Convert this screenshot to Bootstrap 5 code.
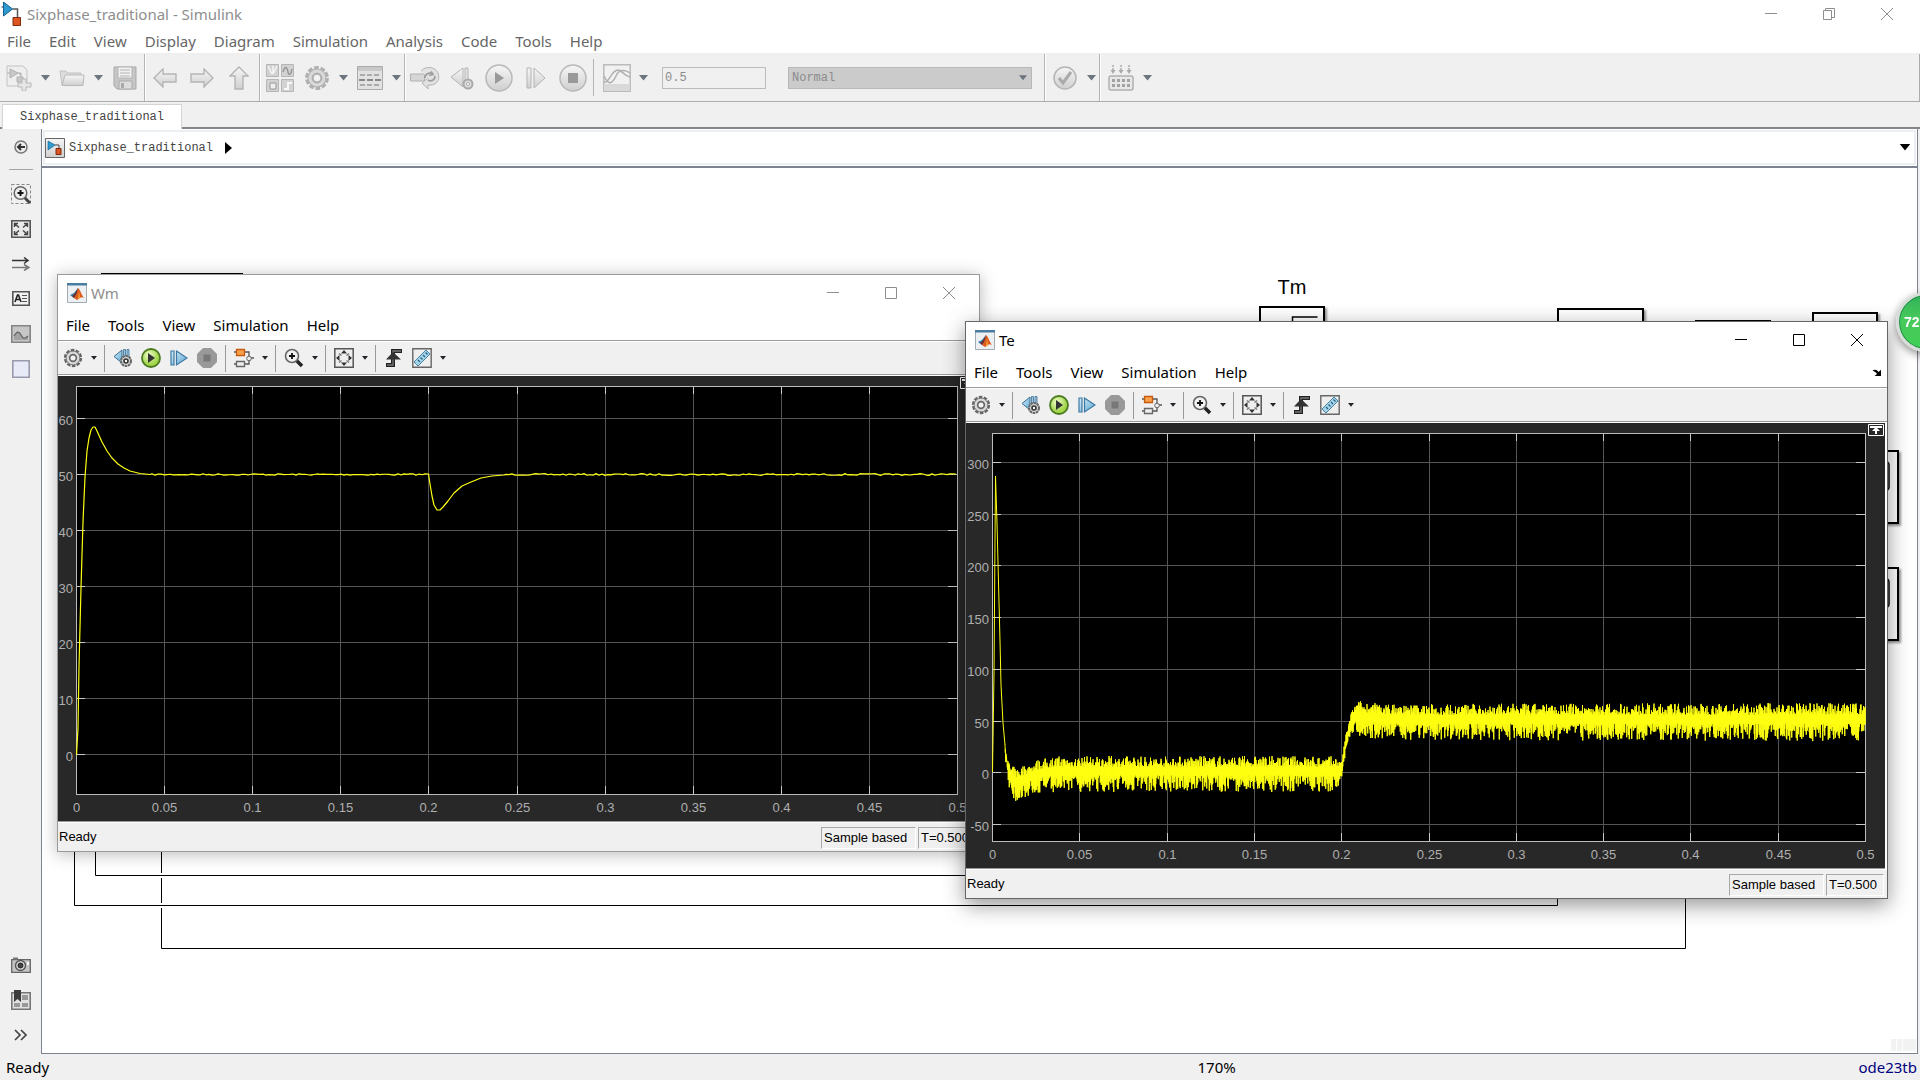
<!DOCTYPE html>
<html lang="en">
<head>
<meta charset="utf-8">
<meta name="viewport" content="width=device-width, initial-scale=1">
<title>Sixphase_traditional - Simulink</title>
<link href="https://cdn.jsdelivr.net/npm/bootstrap@5.3.0/dist/css/bootstrap.min.css" rel="stylesheet">
<style>
:root { --chrome:#f0f0f0; --edge:#7d8290; --ui:"Noto Sans","Open Sans",sans-serif; --code:"Liberation Mono",monospace; }
body { font-family:var(--ui); font-size:15px; line-height:20px; color:#000; background:var(--chrome); }
svg { display:block; }
button { color:inherit; }
.tool { width:37px; padding:0; border:0; background:none; display:flex; align-items:center; justify-content:center; }
.drop { width:16px; padding:0; border:0; background:none; display:flex; align-items:center; justify-content:center; }
.bar-title { height:28px; background:#fff; color:#8e8e8e; }
.bar-menu { height:26px; background:#fff; border-bottom:1px solid #eee; padding-left:7px; gap:18px; }
.bar-menu a { color:#666; }
.winctl { width:58px; border:0; background:none; padding:0; display:flex; align-items:center; justify-content:center; }
.bar-tools { height:48px; border-bottom:1px solid #adadad; border-right:1px solid #adadad; }
.grp { border-right:1px solid #b4b4b4; padding-left:1px; box-shadow:1px 0 #fff; }
.grp-first { padding-left:0; padding-right:1px; }
.grp-nav { padding-right:2px; }
.grp-last { padding-left:2px; }
.split { width:1px; background:#b4b4b4; margin:5px 4px 5px 2px; }
.time-box { width:104px; height:22px; margin-left:11px; padding:0 2px; border:1px solid #bbb; border-radius:0; background:#f0f0f0; color:#8c8c8c; font:12px/20px var(--code); }
.mode-box { width:244px; height:22px; padding:0 3px; border:1px solid #b8b8b8; background:#cbcbcb; color:#8c8c8c; font:12px/20px var(--code); appearance:none; opacity:1; }
.mode-wrap { margin:0 12px 0 22px; }
.mode-wrap svg { position:absolute; right:5px; top:8px; }
.bar-tabs { height:27px; padding:2px 0 0 2px; border-bottom:2px solid #84868a; }
.doc-tab { width:180px; height:25px; background:#fff; border:1px solid #d4d4d4; border-bottom:0; color:#444; font:12px/24px var(--code); text-align:center; z-index:1; }
.rail { width:41px; padding-bottom:2px; }
.rail button { height:35px; width:41px; border:0; background:none; padding:0; display:flex; align-items:center; justify-content:center; }
.rail hr { margin:5px 8px 6px 9px; border-top:1px solid #a5a5a5; opacity:1; }
.sheet { border:solid var(--edge); border-width:0 1px 1px; margin-right:2px; min-width:0; }
.crumbs { height:39px; background:#fff; border-bottom:2px solid var(--edge); box-shadow:inset 0 0 0 1px #fff, inset 0 0 0 3px #eceff2; padding:0 6px 0 3px; font:12px/20px var(--code); }
.crumbs a { color:#444; }
.crumb-arrow { margin-left:12px; }
.canvas { background:#fff; }
.status { height:26px; padding:0 3px 0 6px; }
.solver { width:35.65%; color:#000080; }
.scope { width:923px; background:#fff; border:1px solid #9a9a9a; box-shadow:0 2px 16px rgba(0,0,0,.28); }
.scope.active { border-color:#666; box-shadow:0 6px 20px rgba(0,0,0,.42); }
#wm { left:15px; top:106px; color:#8e8e8e; }
#te { left:923px; top:153px; }
.scope-title { height:35px; padding:0 1px 0 9px; }
.scope-menu { height:31px; padding:0 5px 0 8px; gap:18px; border-bottom:1px solid #9a9a9a; }
.scope-menu a { color:#000; }
.scope-tools { height:34px; background:var(--chrome); border-bottom:1px solid #9a9a9a; border-top:1px solid #fff; padding-left:1px; }
.scope-tools .tool { width:28px; }
.scope-tools .drop { width:13px; }
.scope-tools .split { margin:3px 4px 2px; background:#999; }
.plot { background:#282828; margin:1px 2px 0 0; border-bottom:1px solid #9a9a9a; }
.plot text { font:13px "Liberation Sans",Arial,sans-serif; fill:#afafaf; }
.scope-status { height:29px; background:var(--chrome); border-top:1px solid #fff; color:#000; font:13px/20px "Liberation Sans",Arial,sans-serif; padding:4px 3px 0 1px; gap:2px; }
.cell { height:22px; border:1px solid #a8a8a8; border-right-color:#fff; border-bottom-color:#fff; padding-left:2px; }
.cell-mode { width:95px; } .cell-time { width:58px; }
.ball { top:292px; right:-36px; width:60px; height:60px; border:3px solid #d6dcd8; border-radius:50%; background:linear-gradient(#2fb457,#48c95c 45%,#3fcf55); box-shadow:inset 0 0 0 1px #1f8a48, 0 3px 8px rgba(0,0,0,.45); color:#fff; font:bold 14px/54px "Liberation Sans",Arial,sans-serif; padding:0 0 2px 5px; text-align:left; z-index:5; }
</style>
<script src="https://cdn.jsdelivr.net/npm/bootstrap@5.3.0/dist/js/bootstrap.bundle.min.js"></script>
</head>
<body class="vh-100 overflow-hidden d-flex flex-column">
<svg width="0" height="0" class="position-absolute" aria-hidden="true">
<defs>
<linearGradient id="gG" x1="0" y1="0" x2="0" y2="1"><stop offset="0" stop-color="#f6f6f6"/><stop offset="1" stop-color="#cfcfcf"/></linearGradient>
<linearGradient id="gB" x1="0" y1="0" x2="1" y2="1"><stop offset="0" stop-color="#d9f0fb"/><stop offset="1" stop-color="#5aa5d0"/></linearGradient>
<radialGradient id="gL" cx=".4" cy=".35"><stop offset="0" stop-color="#f2ffcf"/><stop offset="1" stop-color="#a3d64b"/></radialGradient>
<symbol id="down" viewBox="0 0 9 6"><path d="M0 0h9L4.500 5.500z" fill="currentColor"/></symbol>
<symbol id="slk" viewBox="0 0 20 24"><path d="M11 7h5v9" fill="none" stroke="#555" stroke-width="1.500"/><path d="M0 5h3" stroke="#234"/><path d="M2 0l9 7-9 7z" fill="#2f9ad0" stroke="#12608f"/><path d="M11.500 15.500h7.500v8h-7.500z" fill="#de5522" stroke="#7d2a10"/></symbol>
<symbol id="model" viewBox="0 0 20 20"><path d="M.5.5h19v19H.5z" fill="url(#gG)" stroke="#666"/><path d="M10 7h4v4" fill="none" stroke="#444"/><path d="M3 3l7 4-7 5z" fill="#2f9ad0" stroke="#12608f" stroke-width=".7"/><path d="M11 10.500h5v6h-5z" fill="#de5522" stroke="#7d2a10"/></symbol>
<symbol id="matlab" viewBox="0 0 20 20"><path d="M.5.5h19v19H.5z" fill="#edf0f3" stroke="#a3abb3"/><path d="M0 0h20v2.500H0z" fill="#487ca0"/><path d="M3 12l4-2 4-5-1 7-3 3z" fill="#3578a8"/><path d="M11 5c2 1 4 8 6 10-2-1-3-1-4 0l-3 2-3-2c2-2 3-6 4-10z" fill="#dc5a1c"/><path d="M11 5c-1 5-2 7-4 10l-2-2c3-1 4-5 6-8z" fill="#7a2822"/><path d="M12 8l1 7-2 1z" fill="#f6a332"/></symbol>
<symbol id="min" viewBox="0 0 12 12"><path d="M0 5.500h12" stroke="currentColor"/></symbol>
<symbol id="max" viewBox="0 0 12 12"><path d="M.5.5h11v11H.5z" fill="none" stroke="currentColor"/></symbol>
<symbol id="restore" viewBox="0 0 12 12"><path d="M.5 2.500h8v9h-8zM2.500 2.500v-2h9v9h-3" fill="none" stroke="currentColor"/></symbol>
<symbol id="x" viewBox="0 0 12 12"><path d="M0 0l12 12M12 0L0 12" fill="none" stroke="currentColor"/></symbol>
<symbol id="new" viewBox="0 0 26 26"><path d="M1 1h16l4 4v16H1z" fill="#eee" stroke="#c2c2c2"/><path d="M4 4l8 4-8 5zM1 8h3M12 8h3v4M11 12h6v5h-6z" fill="#c9c9c9" stroke="#b0b0b0"/><path d="M16 14h4v4h5v4h-5v4h-4v-4h-4v-4h4z" fill="#e6e6e6" stroke="#b8b8b8"/></symbol>
<symbol id="open" viewBox="0 0 26 18"><path d="M3 16L1 2h6l1 2h14v4" fill="#ddd" stroke="#c2c2c2"/><path d="M3 16.500L6 6h19l-1 10.500z" fill="url(#gG)" stroke="#b8b8b8"/></symbol>
<symbol id="save" viewBox="0 0 24 24"><path d="M1 1h22v22H4l-3-3z" fill="#c6c6c6" stroke="#a9a9a9"/><path d="M5 1h14v11H5z" fill="#f1f1f1" stroke="#b4b4b4"/><path d="M7 4h10M7 7h10M7 10h10" stroke="#b5b5b5"/><path d="M6 15h13v8H6z" fill="#ddd" stroke="#aaa"/><path d="M8 17h3v5H8z" fill="#aaa"/></symbol>
<symbol id="arw" viewBox="0 0 24 20"><path d="M1 10L10 1v5h13v8H10v5z" fill="url(#gG)" stroke="#b4b4b4" stroke-width="1.400"/></symbol>
<symbol id="lib" viewBox="0 0 28 28"><path d="M.5.5h12v12H.5zM15.500.5h12v12h-12zM.5 15.500h12v12H.5zM15.500 15.500h12v12h-12z" fill="#d2d2d2" stroke="#b6b6b6"/><path d="M2 2l4 8M7 2v8M11 2l-4 8" fill="none" stroke="#f4f4f4" stroke-width="1.500"/><path d="M17 8c2-7 4-5 5 0s3 2 4-3" fill="none" stroke="#999" stroke-width="1.500"/><path d="M18 25h4v-6h4" fill="none" stroke="#f8f8f8" stroke-width="2"/><path d="M4 19h6v6H4z" fill="#eee" stroke="#999"/></symbol>
<symbol id="gear" viewBox="0 0 24 24"><circle cx="12" cy="12" r="9.500" fill="none" stroke="currentColor" stroke-width="3" stroke-dasharray="4.300 1.670"/><circle cx="12" cy="12" r="8.300" fill="#d9d9d9" stroke="currentColor" stroke-width="1"/><circle cx="12" cy="12" r="4" fill="#f2f2f2" stroke="currentColor" stroke-width="2"/></symbol>
<symbol id="form" viewBox="0 0 26 24"><path d="M.5.5h25v23H.5z" fill="#e2e2e2" stroke="#aaa"/><path d="M1 1h24v4H1z" fill="#c8c8c8"/><path d="M3 9h20M3 19h20" stroke="#aaa" stroke-width="2" stroke-dasharray="5 2"/><path d="M2 14h22" stroke="#888" stroke-width="2" stroke-dasharray="6 2"/></symbol>
<symbol id="loop" viewBox="0 0 30 24"><path d="M.5 8h14v7H.5z" fill="#d6d6d6" stroke="#b0b0b0"/><path d="M11 5c4-5 14-5 17 2 3 8-3 13-10 12v4l-6-6 6-5" fill="#e2e2e2" stroke="#b4b4b4"/><path d="M15 12c0-4 4-6 7-4M21 5.500l2 3-4 1M25 10c0 4-4 6-7 4" fill="none" stroke="#9f9f9f" stroke-width="1.800"/></symbol>
<symbol id="backset" viewBox="0 0 24 24"><path d="M13 2v19L1 11z" fill="url(#gG)" stroke="#b4b4b4"/><path d="M15 2h3v16h-3z" fill="#e2e2e2" stroke="#b4b4b4"/><circle cx="18" cy="18" r="4.500" fill="#ddd" stroke="#a9a9a9" stroke-width="2"/><circle cx="18" cy="18" r="1.500" fill="#fff" stroke="#aaa"/></symbol>
<symbol id="playG" viewBox="0 0 28 28"><circle cx="14" cy="14" r="13" fill="url(#gG)" stroke="#b8b8b8" stroke-width="1.500"/><path d="M10 8l9 6-9 6z" fill="#999"/></symbol>
<symbol id="stepG" viewBox="0 0 20 22"><path d="M1 1h4v20H1zM8 1l11 10L8 21z" fill="url(#gG)" stroke="#b4b4b4"/></symbol>
<symbol id="stopG" viewBox="0 0 28 28"><circle cx="14" cy="14" r="13" fill="url(#gG)" stroke="#b8b8b8" stroke-width="1.500"/><path d="M9 9h10v10H9z" fill="#999"/></symbol>
<symbol id="scopeG" viewBox="0 0 28 28"><path d="M.8.8h26.400v26.400H.8z" fill="#f1f1f1" stroke="#bbb" stroke-width="1.500"/><path d="M1 20h26v7H1z" fill="#d9d9d9"/><path d="M1 18c5 2 7-12 14-12 4 0 6 6 12 7M1 12c5 11 9 7 13-2 3-5 9-4 13-1" fill="none" stroke="#b0b0b0" stroke-width="1.500"/></symbol>
<symbol id="check" viewBox="0 0 24 24"><circle cx="12" cy="12" r="11" fill="url(#gG)" stroke="#b5b5b5" stroke-width="1.500"/><path d="M6 12l4 5 8-11" fill="none" stroke="#aaa" stroke-width="3"/></symbol>
<symbol id="build" viewBox="0 0 26 26"><path d="M5 0v6M13 0v6M21 0v6" stroke="#aaa" stroke-width="1.500" stroke-dasharray="2 1"/><path d="M2.500 5h5L5 9zM10.500 5h5L13 9zM18.500 5h5L21 9z" fill="#aaa"/><rect x="1" y="11" width="24" height="14" rx="2" fill="#e8e8e8" stroke="#b0b0b0" stroke-width="1.500"/><path d="M4 15.500h18M4 20.500h18" stroke="#a2a2a2" stroke-width="3" stroke-dasharray="3 2"/></symbol>
<symbol id="hide" viewBox="0 0 14 14"><circle cx="7" cy="7" r="6" fill="#eee" stroke="#777" stroke-width="1.500"/><path d="M11 7H4M7 4L4 7l3 3" fill="none" stroke="#333" stroke-width="2"/></symbol>
<symbol id="zoombox" viewBox="0 0 20 20"><path d="M.5.5h19v19H.5z" fill="none" stroke="#888" stroke-dasharray="3 2"/><path d="M13 13l6 6" stroke="#444" stroke-width="3"/><circle cx="9.500" cy="9" r="6.300" fill="#eee" stroke="#666" stroke-width="1.500"/><path d="M6.500 9h6M9.500 6v6" stroke="#111" stroke-width="2"/></symbol>
<symbol id="fitbox" viewBox="0 0 20 18"><path d="M.8.8h18.400v16.400H.8z" fill="#e9e9e9" stroke="#555" stroke-width="1.600"/><path d="M3.500 7V3.500H7M13 3.500h3.500V7M16.500 11v3.500H13M7 14.500H3.500V11M4 4l4 3.500M16 4l-4 3.500M16 14l-4-3.500M4 14l4-3.500" fill="none" stroke="#444" stroke-width="1.400"/></symbol>
<symbol id="times" viewBox="0 0 20 14"><path d="M1 3.500h15M13 .5l4 3-4 3" fill="none" stroke="#333" stroke-width="1.500"/><path d="M1 10.500h15M13 7.500l5 3-5 3" fill="none" stroke="#777" stroke-width="1.500"/></symbol>
<symbol id="note" viewBox="0 0 18 15"><path d="M.8.8h16.400v13.400H.8z" fill="#f2f2f2" stroke="#555" stroke-width="1.600"/><path d="M3 11l2.500-7h1L9 11M4 8.500h4" fill="none" stroke="#222" stroke-width="1.600"/><path d="M10 4.500h5M10 7.500h5M10 10.500h5" stroke="#555"/></symbol>
<symbol id="image" viewBox="0 0 20 18"><path d="M.8.8h18.400v16.400H.8z" fill="#c6c6c6" stroke="#858585" stroke-width="1.600"/><path d="M3 11c3-5 5-5 7-1s4 4 7 1v4H3z" fill="#a2a2a2"/><path d="M3 11c3-5 5-5 7-1s4 4 7 1" fill="none" stroke="#666" stroke-width="1.300"/></symbol>
<symbol id="area" viewBox="0 0 18 18"><path d="M.8.8h16.400v16.400H.8z" fill="#e8eaf8" stroke="#9a9aae" stroke-width="1.600"/></symbol>
<symbol id="camera" viewBox="0 0 20 16"><path d="M.7 2.700h18.600v12.600H.7z" fill="#c5c5c5" stroke="#666" stroke-width="1.300"/><path d="M2 .5h5v2H2z" fill="#777"/><circle cx="9.500" cy="8.500" r="5" fill="#ddd" stroke="#555" stroke-width="1.400"/><circle cx="9.500" cy="8.500" r="2.500" fill="#444" stroke="#222"/><path d="M16 5h2v3h-2z" fill="#fff"/></symbol>
<symbol id="book" viewBox="0 0 20 20"><path d="M.8 2.800h18.400v16.400H.8z" fill="#e2e2e2" stroke="#777" stroke-width="1.600"/><path d="M11 5h6v5h-6zM11 13h6v4h-6zM3 13h6v4H3z" fill="#999"/><path d="M3 0h7v12l-3.500-3L3 12z" fill="#3c3c3c"/></symbol>
<symbol id="more" viewBox="0 0 14 12"><path d="M1 1l5 5-5 5M7 1l5 5-5 5" fill="none" stroke="#444" stroke-width="1.700"/></symbol>
<symbol id="w-back" viewBox="0 0 20 20"><path d="M9 2v13L1 8.500z" fill="url(#gB)" stroke="#3a6f94"/><path d="M10.500 1.500h2v9h-2zM14 1.500h2v9h-2z" fill="#9cc8e2" stroke="#3a6f94" stroke-width=".8"/><circle cx="13" cy="13" r="5" fill="#d9d9d9" stroke="#666" stroke-width="2" stroke-dasharray="2.600 .6"/><circle cx="13" cy="13" r="2" fill="#fff" stroke="#333" stroke-width="1.600"/></symbol>
<symbol id="w-play" viewBox="0 0 20 20"><circle cx="10" cy="10" r="9" fill="url(#gL)" stroke="#4c7a21" stroke-width="1.800"/><path d="M7 5l7 5-7 5z" fill="#333"/></symbol>
<symbol id="w-step" viewBox="0 0 18 18"><path d="M1 2h3v14H1zM6.500 2L17 9 6.500 16z" fill="url(#gB)" stroke="#3b78a3" stroke-width="1.200"/></symbol>
<symbol id="w-stop" viewBox="0 0 20 20"><path d="M6 0h8l6 6v8l-6 6H6l-6-6V6z" fill="#999"/><path d="M6.500 6.500h7v7h-7z" fill="#777"/></symbol>
<symbol id="w-sig" viewBox="0 0 20 20"><path d="M0 4h3M11 4h4v5M0 16h3M11 16h4v-4M17 10h3" fill="none" stroke="#555" stroke-width="1.300"/><path d="M2.500 1.500h8v6h-8z" fill="#f9a04a" stroke="#c55a10" stroke-width="1.300"/><path d="M2.500 13.500h8v5h-8z" fill="#eee" stroke="#666" stroke-width="1.300"/><circle cx="15" cy="10.500" r="2.300" fill="#eee" stroke="#666"/></symbol>
<symbol id="w-zoom" viewBox="0 0 20 20"><path d="M12 12l6 6" stroke="#222" stroke-width="3.600"/><circle cx="8" cy="8" r="6.500" fill="#f2f2f2" stroke="#666" stroke-width="1.600"/><path d="M5 8h6M8 5v6" stroke="#111" stroke-width="1.800"/></symbol>
<symbol id="w-fit" viewBox="0 0 20 20"><path d="M.8.8h18.400v18.400H.8z" fill="#efefef" stroke="#555" stroke-width="1.500"/><path d="M10 2l3 3.500H7zM10 18l3-3.500H7zM2 10l3.500-3v6zM18 10l-3.500-3v6z" fill="#333"/><path d="M5 5.500l2.500 2M15 5.500l-2.500 2M5 14.500l2.500-2M15 14.500l-2.500-2" stroke="#777" stroke-width="1.500"/></symbol>
<symbol id="w-trig" viewBox="0 0 18 20"><path d="M1 17h7V3h9" fill="none" stroke="#222" stroke-width="4"/><path d="M2 17h6V3h8" fill="none" stroke="#777" stroke-width="1.300"/><path d="M8 4l8 7.500H1z" fill="#333"/></symbol>
<symbol id="w-rule" viewBox="0 0 20 20"><path d="M.8.8h18.400v18.400H.8z" fill="#eee" stroke="#666" stroke-width="1.400"/><path d="M2 14L14 2l4 4L6 18z" fill="#a6d5ea" stroke="#4384a8"/><path d="M8 14l-2-2M10.500 11.500l-2-2M13 9l-2-2M15.500 6.500l-2-2" stroke="#245f82" stroke-width="1.200"/></symbol>
<symbol id="undock" viewBox="0 0 10 7"><path d="M.5 1.500C3 0 5 1 6.500 3L9 .8V7H2.500L5 5C4 3 2.500 2.500.5 1.500z" fill="#000"/></symbol>
</defs>
</svg>

<header>
  <div class="bar-title d-flex">
    <div class="d-flex align-items-center flex-fill ps-0 gap-1"><svg width="23" height="24"><use href="#slk"/></svg><span>Sixphase_traditional - Simulink</span></div>
    <div class="d-flex pe-1">
      <button class="winctl" aria-label="Minimize"><svg width="12" height="12"><use href="#min"/></svg></button>
      <button class="winctl" aria-label="Restore"><svg width="12" height="12"><use href="#restore"/></svg></button>
      <button class="winctl" aria-label="Close"><svg width="12" height="12"><use href="#x"/></svg></button>
    </div>
  </div>
  <nav class="bar-menu d-flex align-items-center" aria-label="Main menu">
    <a class="text-decoration-none" href="#">File</a><a class="text-decoration-none" href="#">Edit</a><a class="text-decoration-none" href="#">View</a><a class="text-decoration-none" href="#">Display</a><a class="text-decoration-none" href="#">Diagram</a><a class="text-decoration-none" href="#">Simulation</a><a class="text-decoration-none" href="#">Analysis</a><a class="text-decoration-none" href="#">Code</a><a class="text-decoration-none" href="#">Tools</a><a class="text-decoration-none" href="#">Help</a>
  </nav>
  <div class="bar-tools d-flex text-secondary" role="toolbar" aria-label="Model toolbar">
    <div class="grp grp-first d-flex">
      <button class="tool" aria-label="New model"><svg width="26" height="26"><use href="#new"/></svg></button>
      <button class="drop" aria-label="New options"><svg width="9" height="6"><use href="#down"/></svg></button>
      <button class="tool" aria-label="Open"><svg width="26" height="18"><use href="#open"/></svg></button>
      <button class="drop" aria-label="Open options"><svg width="9" height="6"><use href="#down"/></svg></button>
      <button class="tool" aria-label="Save"><svg width="24" height="24"><use href="#save"/></svg></button>
    </div>
    <div class="grp grp-nav d-flex">
      <button class="tool" aria-label="Back"><svg width="24" height="20"><use href="#arw"/></svg></button>
      <button class="tool" aria-label="Forward"><svg width="24" height="20" viewBox="0 0 24 20"><path d="M23 10L14 1v5H1v8h13v5z" fill="url(#gG)" stroke="#b4b4b4" stroke-width="1.400"/></svg></button>
      <button class="tool" aria-label="Up to parent"><svg width="20" height="24" viewBox="0 0 20 24"><path d="M10 1L1 10h5v13h8V10h5z" fill="url(#gG)" stroke="#b4b4b4" stroke-width="1.400"/></svg></button>
    </div>
    <div class="grp d-flex">
      <button class="tool" aria-label="Library browser"><svg width="28" height="28"><use href="#lib"/></svg></button>
      <button class="tool" aria-label="Model configuration" style="color:#b0b0b0"><svg width="26" height="26"><use href="#gear"/></svg></button>
      <button class="drop" aria-label="Configuration options"><svg width="9" height="6"><use href="#down"/></svg></button>
      <button class="tool" aria-label="Model explorer"><svg width="26" height="24"><use href="#form"/></svg></button>
      <button class="drop" aria-label="Explorer options"><svg width="9" height="6"><use href="#down"/></svg></button>
    </div>
    <div class="grp d-flex align-items-stretch">
      <button class="tool" aria-label="Fast restart"><svg width="30" height="24"><use href="#loop"/></svg></button>
      <button class="tool" aria-label="Step back"><svg width="24" height="24"><use href="#backset"/></svg></button>
      <button class="tool" aria-label="Run"><svg width="28" height="28"><use href="#playG"/></svg></button>
      <button class="tool" aria-label="Step forward"><svg width="20" height="22"><use href="#stepG"/></svg></button>
      <button class="tool" aria-label="Stop"><svg width="28" height="28"><use href="#stopG"/></svg></button>
      <span class="split"></span>
      <button class="tool" aria-label="Data inspector"><svg width="28" height="28"><use href="#scopeG"/></svg></button>
      <button class="drop" aria-label="Inspector options"><svg width="9" height="6"><use href="#down"/></svg></button>
      <input class="time-box align-self-center" type="text" value="0.5" aria-label="Simulation stop time" disabled>
      <div class="mode-wrap position-relative align-self-center"><select class="mode-box d-block rounded-0" aria-label="Simulation mode" disabled><option>Normal</option></select><svg width="8" height="6"><use href="#down"/></svg></div>
    </div>
    <div class="grp d-flex">
      <button class="tool" aria-label="Model advisor"><svg width="24" height="24"><use href="#check"/></svg></button>
      <button class="drop" aria-label="Advisor options"><svg width="9" height="6"><use href="#down"/></svg></button>
    </div>
    <div class="grp-last d-flex">
      <button class="tool" aria-label="Build model"><svg width="26" height="26"><use href="#build"/></svg></button>
      <button class="drop" aria-label="Build options"><svg width="9" height="6"><use href="#down"/></svg></button>
    </div>
  </div>
  <div class="bar-tabs"><div class="doc-tab position-relative">Sixphase_traditional</div></div>
</header>

<main class="d-flex flex-fill" style="min-height:0">
  <aside class="rail d-flex flex-column justify-content-between flex-shrink-0">
    <div>
      <button aria-label="Hide browser"><svg width="14" height="14"><use href="#hide"/></svg></button>
      <hr>
      <button aria-label="Zoom"><svg width="20" height="20"><use href="#zoombox"/></svg></button>
      <button aria-label="Fit to view"><svg width="20" height="18"><use href="#fitbox"/></svg></button>
      <button aria-label="Sample time"><svg width="20" height="14"><use href="#times"/></svg></button>
      <button aria-label="Annotation"><svg width="18" height="15"><use href="#note"/></svg></button>
      <button aria-label="Image"><svg width="20" height="18"><use href="#image"/></svg></button>
      <button aria-label="Area"><svg width="18" height="18"><use href="#area"/></svg></button>
    </div>
    <div>
      <button aria-label="Screenshot"><svg width="20" height="16"><use href="#camera"/></svg></button>
      <button aria-label="Viewmarks"><svg width="20" height="20"><use href="#book"/></svg></button>
      <button aria-label="More"><svg width="14" height="12"><use href="#more"/></svg></button>
    </div>
  </aside>
  <section class="sheet d-flex flex-column flex-fill">
    <div class="crumbs d-flex align-items-center justify-content-between">
      <a href="#" class="d-flex align-items-center text-decoration-none"><svg width="20" height="20" class="me-1"><use href="#model"/></svg><span>Sixphase_traditional</span><svg width="7" height="12" viewBox="0 0 7 12" class="crumb-arrow"><path d="M0 0l7 6-7 6z"/></svg></a>
      <button class="border-0 bg-transparent p-0" aria-label="History"><svg width="12" height="7"><use href="#down"/></svg></button>
    </div>
    <div class="canvas position-relative flex-fill overflow-hidden">
      <svg class="position-absolute w-100 h-100" aria-label="Block diagram">
        <g transform="translate(-42 -168)" fill="none" stroke="#000">
          <path d="M74.500 840v65.500h1483V880M95.500 840v35.500H980M161.500 840v33M161.500 878v25M161.500 908v40.500h1524V880"/>
          <path d="M101 274h142M1695 321h76" stroke-width="2"/>
          <g fill="#fff" stroke-width="2" style="filter:drop-shadow(2px 2px 1px #999)"><path d="M1260 307h64v40h-64zM1558 309h85v40h-85zM1813 313h64v40h-64zM1860 451h38v72h-38zM1860 568h38v72h-38z"/></g>
          <path d="M1292.500 340v-23h25" stroke-width="1.500"/>
          <rect x="1860" y="461" width="29" height="30" rx="4" stroke-width="1.500"/><rect x="1860" y="578" width="29" height="30" rx="4" stroke-width="1.500"/>
          <path d="M1891 1039h5v12h-5zM1897 1039h5v12h-5zM1903 1039h13v12h-13z" fill="#f2f2f2" stroke="none"/>
          <text x="1292" y="294" text-anchor="middle" fill="#000" stroke="none" style="font:20px 'Liberation Sans',Arial,sans-serif">Tm</text>
        </g>
      </svg>
    </div>
  </section>
</main>

<footer class="status d-flex align-items-center flex-shrink-0">
  <span class="flex-fill">Ready</span><span>170%</span><span class="solver text-end">ode23tb</span>
</footer>
<button class="ball position-fixed" aria-label="Memory usage">72</button>

<template id="scope-template">
  <article class="scope position-absolute">
    <div class="scope-title d-flex">
      <div class="d-flex align-items-center flex-fill"><svg width="20" height="20" class="me-1"><use href="#matlab"/></svg><span class="scope-name"></span></div>
      <button class="winctl" aria-label="Minimize"><svg width="12" height="12"><use href="#min"/></svg></button>
      <button class="winctl" aria-label="Maximize"><svg width="12" height="12"><use href="#max"/></svg></button>
      <button class="winctl" aria-label="Close"><svg width="12" height="12"><use href="#x"/></svg></button>
    </div>
    <nav class="scope-menu d-flex align-items-center" aria-label="Scope menu">
      <a class="text-decoration-none" href="#">File</a><a class="text-decoration-none" href="#">Tools</a><a class="text-decoration-none" href="#">View</a><a class="text-decoration-none" href="#">Simulation</a><a class="text-decoration-none" href="#">Help</a>
      <button class="border-0 bg-transparent p-0 ms-auto" aria-label="Undock"><svg width="10" height="7"><use href="#undock"/></svg></button>
    </nav>
    <div class="scope-tools d-flex text-dark" role="toolbar" aria-label="Scope toolbar">
      <button class="tool" aria-label="Configuration" style="color:#666"><svg width="20" height="20"><use href="#gear"/></svg></button>
      <button class="drop" aria-label="Configuration options"><svg width="6" height="4"><use href="#down"/></svg></button><span class="split"></span>
      <button class="tool" aria-label="Step back"><svg width="20" height="20"><use href="#w-back"/></svg></button>
      <button class="tool" aria-label="Run"><svg width="20" height="20"><use href="#w-play"/></svg></button>
      <button class="tool" aria-label="Step forward"><svg width="18" height="18"><use href="#w-step"/></svg></button>
      <button class="tool" aria-label="Stop"><svg width="20" height="20"><use href="#w-stop"/></svg></button><span class="split"></span>
      <button class="tool" aria-label="Highlight block"><svg width="20" height="20"><use href="#w-sig"/></svg></button>
      <button class="drop" aria-label="Highlight options"><svg width="6" height="4"><use href="#down"/></svg></button><span class="split"></span>
      <button class="tool" aria-label="Zoom"><svg width="20" height="20"><use href="#w-zoom"/></svg></button>
      <button class="drop" aria-label="Zoom options"><svg width="6" height="4"><use href="#down"/></svg></button><span class="split"></span>
      <button class="tool" aria-label="Scale axes"><svg width="20" height="20"><use href="#w-fit"/></svg></button>
      <button class="drop" aria-label="Scale options"><svg width="6" height="4"><use href="#down"/></svg></button><span class="split"></span>
      <button class="tool" aria-label="Triggers"><svg width="18" height="20"><use href="#w-trig"/></svg></button>
      <button class="tool" aria-label="Measurements"><svg width="20" height="20"><use href="#w-rule"/></svg></button>
      <button class="drop" aria-label="Measurement options"><svg width="6" height="4"><use href="#down"/></svg></button>
    </div>
    <div class="plot"></div>
    <div class="scope-status d-flex"><span class="me-auto">Ready</span><span class="cell cell-mode">Sample based</span><span class="cell cell-time">T=0.500</span></div>
  </article>
</template>

<script>
let seed = 7;
function rnd() { seed = (seed * 16807) % 2147483647; return seed / 2147483647; }

// Linear interpolation through [x, y] knots
function at(knots, x) {
  for (let i = 1; i < knots.length; i++) {
    if (x <= knots[i][0]) {
      const [a, b] = knots[i - 1], [c, d] = knots[i];
      return b + (d - b) * (x - a) / (c - a);
    }
  }
  return knots[knots.length - 1][1];
}

// Mechanical speed: smooth transient with a slight ripple
function speedPath() {
  const settled = 98.5;
  let d = 'M18.500 379L20 352L21 290L23 212L25 146L27 101L29 75L31 62L33 54L35 51L37 51L39 55L44 66L49 75L54 82L60 88L66 92L72 95L82 97.500L92 98.500';
  for (let x = 94; x < 370; x += 3) d += `L${x} ${settled + (rnd() - .5) * 1.600}`;
  d += 'L370.500 98L372 108L374 120L376 129L379 134L382 134L385 131L390 125L396 117L404 110L413 106L423 102L434 100L446 99';
  for (let x = 448; x <= 899; x += 3) d += `L${x} ${settled + (rnd() - .5) * 1.800}`;
  return d;
}

// Electromagnetic torque: start-up spike, then a dense ripple band
function torquePath() {
  let d = 'M26.500 349L28 250L29.500 53L31 100L32 140L34 218L35 262L37 300L39 322';
  const mid = [[39, 326], [42, 348], [46, 357], [50, 360], [58, 357], [70, 352], [90, 349], [375, 349], [380, 318], [385, 300], [391, 293], [410, 296], [430, 297], [899, 297]];
  const amp = [[39, 7], [43, 12], [50, 16], [62, 15], [90, 16], [372, 16], [376, 6], [384, 10], [392, 16], [899, 17]];
  for (let x = 39; x <= 899; x += .5) {
    const c = at(mid, x), a = at(amp, x);
    d += `L${x} ${(c - a * (.3 + .7 * Math.pow(rnd(), 1.900))).toFixed(1)}`;
    d += `L${x + .25} ${(c + a * (.2 + 1.050 * Math.pow(rnd(), 2))).toFixed(1)}`;
  }
  return d;
}

function plot(o) {
  let s = `<svg width="918" height="445" role="img" aria-label="${o.name} against time"><rect x="${o.left}" y="10" width="${o.right - o.left}" height="408"/>`;
  let grid = '', ticks = '', labels = '';
  for (let i = 0; i <= 10; i++) {
    const x = Math.round(o.left + (o.right - o.left) * i / 10) + .5;
    if (i && i < 10) { grid += `M${x} 10V418`; ticks += `M${x} 10v8M${x} 418v-8`; }
    labels += `<text x="${x}" y="436" text-anchor="middle">${+(i * .05).toFixed(2)}</text>`;
  }
  o.values.forEach((v, i) => {
    const y = Math.round(o.first + o.step * i) + .5;
    grid += `M${o.left} ${y}H${o.right}`; ticks += `M${o.left} ${y}h9M${o.right} ${y}h-9`;
    labels += `<text x="${o.left - 3}" y="${y + 6}" text-anchor="end">${v}</text>`;
  });
  s += `<path d="${grid}" stroke="#555" fill="none"/><path d="${ticks}" stroke="#c8c8c8" fill="none"/>`;
  s += `<rect x="${o.left + .5}" y="10.500" width="${o.right - o.left}" height="408" fill="none" stroke="#bcbcbc"/>${labels}`;
  s += `<path d="${o.path}" fill="none" stroke="#ffff11" stroke-width="${o.pen}" stroke-linejoin="round"/>`;
  s += `<path d="M902.500 1.500h15v11h-15z" fill="#282828" stroke="#fff"/><path d="M904 3h12v2h-12zM910 4l4 4h-3v3h-2v-3h-3z" fill="#fff"/></svg>`;
  return s;
}

function addScope(id, name, active, options) {
  const node = document.getElementById('scope-template').content.cloneNode(true).firstElementChild;
  node.id = id;
  node.classList.toggle('active', active);
  node.querySelector('.scope-name').textContent = name;
  node.querySelector('.plot').innerHTML = plot({ name, ...options });
  document.querySelector('.canvas').append(node);
}
addScope('wm', 'Wm', false, { left: 18, right: 899, first: 42, step: 56, values: [60, 50, 40, 30, 20, 10, 0], path: speedPath(), pen: 1.200 });
addScope('te', 'Te', true, { left: 26, right: 899, first: 39, step: 51.700, values: [300, 250, 200, 150, 100, 50, 0, -50], path: torquePath(), pen: 1 });
</script>
</body>
</html>
